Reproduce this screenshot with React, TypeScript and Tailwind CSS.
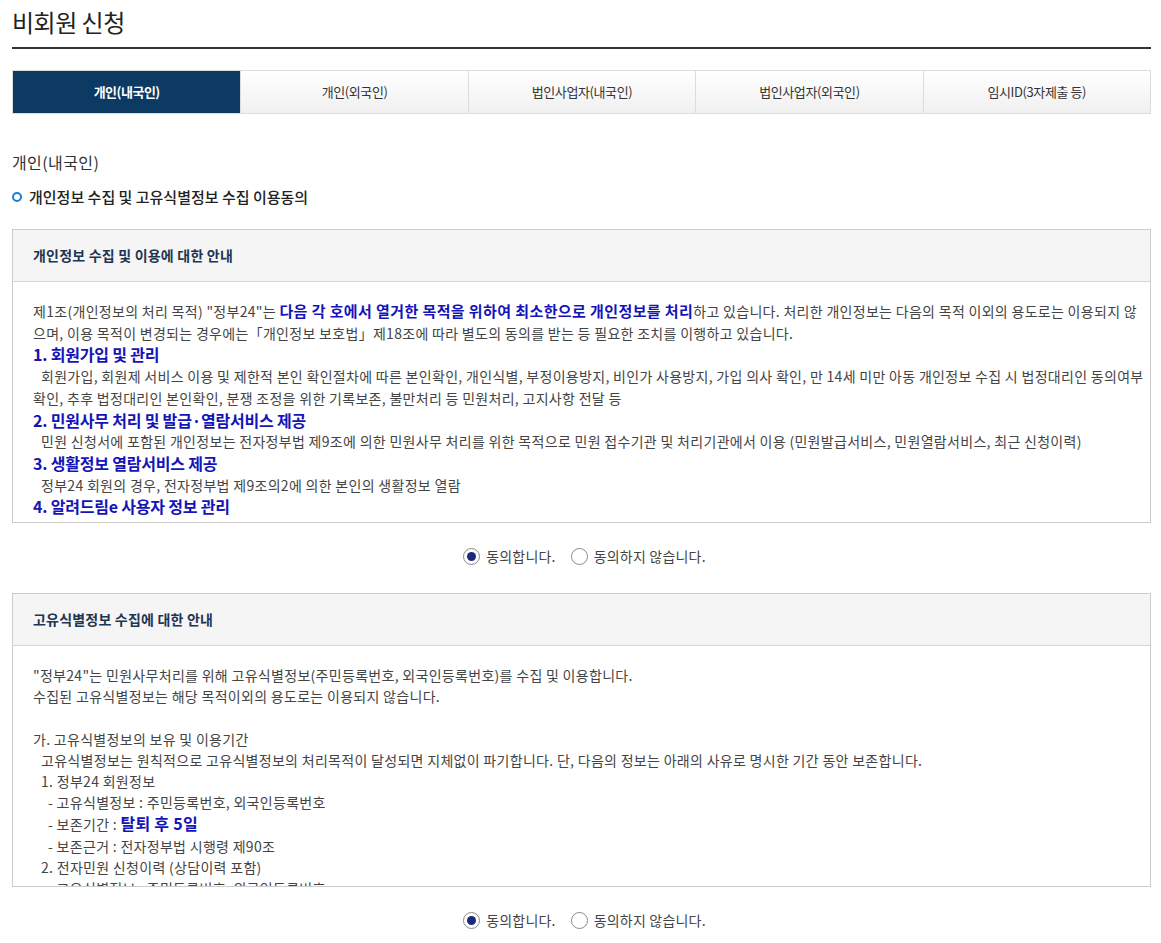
import React from "react";

const FONT = { fontFamily: '"Noto Sans CJK KR", "Noto Sans", sans-serif' };

const tabs = ["개인(내국인)", "개인(외국인)", "법인사업자(내국인)", "법인사업자(외국인)", "임시ID(3자제출 등)"];

function Radio({ checked, label }: { checked: boolean; label: string }) {
  return (
    <label className="flex items-center gap-[6px] text-[14px] tracking-[0.2px] text-[#444]">
      <span className="flex h-[17px] w-[17px] items-center justify-center rounded-full border border-[#8a8a8a] bg-white">
        {checked && <span className="h-[9px] w-[9px] rounded-full bg-[#1c2a7a]" />}
      </span>
      <span>{label}</span>
    </label>
  );
}

function RadioRow() {
  return (
    <div className="flex h-[66px] items-center justify-center gap-[15px] pl-[6px]">
      <Radio checked label="동의합니다." />
      <Radio checked={false} label="동의하지 않습니다." />
    </div>
  );
}

const scrollCls =
  "h-[240px] overflow-y-auto overflow-x-hidden [&::-webkit-scrollbar]:w-[11px] [&::-webkit-scrollbar-track]:bg-white [&::-webkit-scrollbar-thumb]:rounded-full [&::-webkit-scrollbar-thumb]:bg-[#c4c4c4] [&::-webkit-scrollbar-thumb]:border-[3px] [&::-webkit-scrollbar-thumb]:border-solid [&::-webkit-scrollbar-thumb]:border-white";

function H({ children }: { children: React.ReactNode }) {
  return <div className="text-[16px] font-bold tracking-[-0.2px] text-[#1414b8]">{children}</div>;
}

function P({ children }: { children: React.ReactNode }) {
  return <div className="indent-[8px]">{children}</div>;
}

export default function App() {
  return (
    <div style={FONT} className="min-h-[943px] bg-white pl-[12px] pr-[10px] text-[#333]">
      <div className="flex h-[47px] items-center pb-[3px]">
        <h1 className="text-[24px] font-normal tracking-[-0.5px] text-[#222]">비회원 신청</h1>
      </div>
      <div className="h-[2px] bg-[#333]" />

      <div className="mt-[21px] grid h-[44px] grid-cols-5 border border-[#dcdcdc]">
        {tabs.map((t, i) => (
          <div
            key={t}
            className={
              i === 0
                ? "flex items-center justify-center bg-[#0c3a63] text-[13px] font-bold tracking-[-0.5px] text-white"
                : "flex items-center justify-center border-l border-[#dcdcdc] bg-gradient-to-b from-white to-[#f0f0f0] text-[13px] tracking-[-0.4px] text-[#333]"
            }
          >
            {t}
          </div>
        ))}
      </div>

      <div className="mt-[37px] text-[16px] leading-[22px] tracking-[0.4px] text-[#333]">개인(내국인)</div>
      <div className="mt-[13px] flex items-center gap-[7px] text-[15px] font-medium leading-[22px] text-[#222]">
        <span className="h-[10px] w-[10px] rounded-full border-[2.5px] border-[#1a7fd6]" />
        <span>개인정보 수집 및 고유식별정보 수집 이용동의</span>
      </div>

      {/* Box 1 */}
      <div className="mt-[21px] border border-[#cccccc]">
        <div className="flex h-[52px] items-center border-b border-[#d6d6d6] bg-[#f5f5f5] px-[20px] text-[14px] font-bold tracking-[0.2px] text-[#1e3553]">
          개인정보 수집 및 이용에 대한 안내
        </div>
        <div className={scrollCls}>
          <div className="break-all pl-[20px] pr-[2px] pt-[18px] pb-[20px] text-[14px] leading-[21.7px] tracking-[0.3px] text-[#444]">
            <div>
              제1조(개인정보의 처리 목적) "정부24"는{" "}
              <span className="text-[15px] font-bold tracking-[0.4px] text-[#1414b8]">
                다음 각 호에서 열거한 목적을 위하여 최소한으로 개인정보를 처리
              </span>
              하고 있습니다. 처리한 개인정보는 다음의 목적 이외의 용도로는 이용되지 않
              <br />
              으며, 이용 목적이 변경되는 경우에는「개인정보 보호법」제18조에 따라 별도의 동의를 받는 등 필요한 조치를 이행하고 있습니다.
            </div>
            <H>1. 회원가입 및 관리</H>
            <P>
              회원가입, 회원제 서비스 이용 및 제한적 본인 확인절차에 따른 본인확인, 개인식별, 부정이용방지, 비인가 사용방지, 가입 의사 확인, 만 14세 미만 아동 개인정보 수집 시 법정대리인 동의여부
              <br />
              확인, 추후 법정대리인 본인확인, 분쟁 조정을 위한 기록보존, 불만처리 등 민원처리, 고지사항 전달 등
            </P>
            <H>2. 민원사무 처리 및 발급·열람서비스 제공</H>
            <P>
              민원 신청서에 포함된 개인정보는 전자정부법 제9조에 의한 민원사무 처리를 위한 목적으로 민원 접수기관 및 처리기관에서 이용 (민원발급서비스, 민원열람서비스, 최근 신청이력)
            </P>
            <H>3. 생활정보 열람서비스 제공</H>
            <P>정부24 회원의 경우, 전자정부법 제9조의2에 의한 본인의 생활정보 열람</P>
            <H>4. 알려드림e 사용자 정보 관리</H>
            <P>알려드림e 서비스 신청, 알림 발송 및 수신 설정 관리, 서비스 이용 이력 관리</P>
            <H>5. 나의 생활정보 서비스 제공</H>
            <P>본인이 신청한 생활정보의 조회 및 제공, 맞춤형 안내 서비스 제공</P>
            <H>6. 전자문서지갑 서비스 제공</H>
            <P>전자문서지갑을 통한 전자증명서 발급·보관·제출 등 서비스 제공</P>
            <H>7. 보조금24 서비스 제공</H>
            <P>본인 및 가구원이 받을 수 있는 정부 혜택의 조회 및 안내</P>
            <H>8. 신청서비스 제공</H>
            <P>각종 민원 신청 및 처리결과 안내, 진행상황 조회 서비스 제공</P>
            <div className="h-[680px]" />
          </div>
        </div>
      </div>

      <RadioRow />

      {/* Box 2 */}
      <div className="mt-[4px] border border-[#cccccc]">
        <div className="flex h-[52px] items-center border-b border-[#d6d6d6] bg-[#f5f5f5] px-[20px] text-[14px] font-bold tracking-[0.2px] text-[#1e3553]">
          고유식별정보 수집에 대한 안내
        </div>
        <div className={scrollCls}>
          <div className="break-all pl-[20px] pr-[6px] pt-[19px] pb-[20px] text-[14px] leading-[21.2px] tracking-[0.3px] text-[#444]">
            <div>"정부24"는 민원사무처리를 위해 고유식별정보(주민등록번호, 외국인등록번호)를 수집 및 이용합니다.</div>
            <div>수집된 고유식별정보는 해당 목적이외의 용도로는 이용되지 않습니다.</div>
            <div className="h-[21.2px]" />
            <div>가. 고유식별정보의 보유 및 이용기간</div>
            <div className="pl-[8px]">
              고유식별정보는 원칙적으로 고유식별정보의 처리목적이 달성되면 지체없이 파기합니다. 단, 다음의 정보는 아래의 사유로 명시한 기간 동안 보존합니다.
            </div>
            <div className="pl-[8px]">1. 정부24 회원정보</div>
            <div className="pl-[15px]">- 고유식별정보 : 주민등록번호, 외국인등록번호</div>
            <div className="pl-[15px]">
              - 보존기간 : <span className="text-[16px] font-bold tracking-[0.3px] text-[#1414b8]">탈퇴 후 5일</span>
            </div>
            <div className="pl-[15px]">- 보존근거 : 전자정부법 시행령 제90조</div>
            <div className="pl-[8px]">2. 전자민원 신청이력 (상담이력 포함)</div>
            <div className="pl-[15px]">- 고유식별정보 : 주민등록번호, 외국인등록번호</div>
            <div className="pl-[15px]">- 보존기간 : 5년</div>
            <div className="pl-[15px]">- 보존근거 : 전자정부법 시행령 제90조</div>
            <div className="h-[21.2px]" />
            <div>나. 고유식별정보의 제3자 제공</div>
            <div className="pl-[8px]">민원처리를 위하여 민원 접수기관 및 처리기관에 제공합니다.</div>
          </div>
        </div>
      </div>

      <RadioRow />
    </div>
  );
}
